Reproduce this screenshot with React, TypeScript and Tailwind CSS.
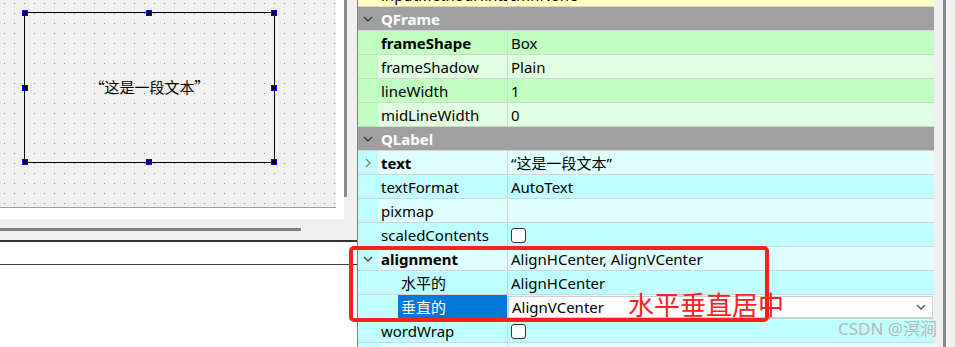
import React from "react";

type Colors = { dark: string; light: string };

const GREEN: Colors = { dark: "bg-[#c0ffc0]", light: "bg-[#e0ffe0]" };
const CYAN: Colors = { dark: "bg-[#c0ffff]", light: "bg-[#e0ffff]" };
const YELLOW: Colors = { dark: "bg-[#ffffc0]", light: "bg-[#ffffc0]" };

const ChevronDown = ({ className }: { className?: string }) => (
  <svg width="10" height="6" viewBox="0 0 10 6" className={className}>
    <polyline points="1,1 5,5 9,1" fill="none" stroke="currentColor" strokeWidth="1.4" />
  </svg>
);

const ChevronRight = () => (
  <svg width="6" height="10" viewBox="0 0 6 10" className="text-[#808080]">
    <polyline points="1,1 5,5 1,9" fill="none" stroke="currentColor" strokeWidth="1.4" />
  </svg>
);

const CheckBox = () => (
  <div className="w-[15px] h-[15px] rounded-[3px] border border-[#333] bg-white" />
);

type RowProps = {
  name: string;
  value?: React.ReactNode;
  colors: Colors;
  dark?: boolean;
  bold?: boolean;
  sub?: boolean;
  arrow?: "down" | "right";
  selected?: boolean;
  combo?: boolean;
};

const PropRow = ({ name, value, colors, dark, bold, sub, arrow, selected, combo }: RowProps) => {
  const bg = dark ? colors.dark : colors.light;
  return (
    <div className="flex h-[24px] shrink-0 border-b border-[#d4d4d4]">
      <div className={`w-[20px] flex items-center justify-center ${colors.dark}`}>
        {arrow === "down" && <ChevronDown className="text-[#404040]" />}
        {arrow === "right" && <ChevronRight />}
      </div>
      <div className={`w-[130px] flex border-r border-[#d4d4d4] ${bg}`}>
        {sub && <div className={`w-[20px] ${colors.dark}`} />}
        <div
          className={`flex-1 flex items-center pl-[3px] pt-px whitespace-nowrap overflow-hidden ${
            selected ? "bg-[#0078d7] text-white" : "text-black"
          } ${bold ? "font-bold" : ""}`}
        >
          {name}
        </div>
      </div>
      {combo ? (
        <div className={`flex-1 flex pt-px pr-px ${bg}`}>
          <div className="flex-1 h-[22px] bg-white border border-[#cfcfcf] flex items-center justify-between pl-[3px] pr-[6px]">
            <span className="pt-px">{value}</span>
            <ChevronDown className="text-[#555]" />
          </div>
        </div>
      ) : (
        <div className={`flex-1 flex items-center pl-[3px] pt-px whitespace-nowrap ${bg}`}>{value}</div>
      )}
    </div>
  );
};

const GroupHeader = ({ title }: { title: string }) => (
  <div className="flex h-[24px] shrink-0 bg-[#a0a0a0] border-b border-[#d4d4d4]">
    <div className="w-[20px] flex items-center justify-center">
      <ChevronDown className="text-[#404040]" />
    </div>
    <div className="pl-[3px] pt-px flex items-center font-bold text-white">{title}</div>
  </div>
);

const Handle = ({ pos }: { pos: string }) => (
  <div className={`absolute w-[6px] h-[6px] bg-black border border-[#0000ff] ${pos}`} />
);

export default function App() {
  return (
    <div className="relative w-[955px] h-[347px] flex overflow-hidden bg-white text-[15px] font-['Noto_Sans','Noto_Sans_CJK_SC',sans-serif]">
      {/* form editor */}
      <div className="w-[357px] flex flex-col">
        <div className="h-[240px] bg-[#f0f0f0] flex flex-col">
          <div className="h-[219px] flex">
            <div className="w-[344px] bg-white pr-[8px] pb-[11px]">
              <div className="w-[336px] h-[208px] border-b border-[#a0a0a0] bg-[#f0f0f0] bg-[radial-gradient(circle_at_4.5px_3.5px,#8a8a8a_0.7px,transparent_0.7px)] bg-size-[10px_10px] pt-[12px] pl-[24px]">
                <div className="relative w-[251px] h-[151px] border border-black flex items-center justify-center font-['Noto_Sans_CJK_SC',sans-serif] text-black">
                  “这是一段文本”
                  <Handle pos="-left-[3px] -top-[3px]" />
                  <Handle pos="left-[121px] -top-[3px]" />
                  <Handle pos="-right-[3px] -top-[3px]" />
                  <Handle pos="-left-[3px] top-[72px]" />
                  <Handle pos="-right-[3px] top-[72px]" />
                  <Handle pos="-left-[3px] -bottom-[3px]" />
                  <Handle pos="left-[121px] -bottom-[3px]" />
                  <Handle pos="-right-[3px] -bottom-[3px]" />
                </div>
              </div>
            </div>
            <div className="w-[13px]">
              <div className="w-[3px] h-[197px] bg-[#8a8a8a]" />
            </div>
          </div>
          <div className="pt-[9px]">
            <div className="w-[301px] h-[3px] bg-[#808080]" />
          </div>
        </div>
        <div className="h-[2px] bg-[#333]" />
        <div className="h-[22px]" />
        <div className="h-px bg-[#444]" />
        <div className="flex-1" />
      </div>

      <div className="w-px bg-[#7f7f7f]" />

      {/* property editor */}
      <div className="w-[576px] flex flex-col overflow-hidden">
        <div className="-mt-[17px]">
          <PropRow name="inputMethodHints" value="ImhNone" colors={YELLOW} />
        </div>
        <GroupHeader title="QFrame" />
        <PropRow name="frameShape" value="Box" colors={GREEN} dark bold />
        <PropRow name="frameShadow" value="Plain" colors={GREEN} />
        <PropRow name="lineWidth" value="1" colors={GREEN} dark />
        <PropRow name="midLineWidth" value="0" colors={GREEN} />
        <GroupHeader title="QLabel" />
        <PropRow name="text" value="“这是一段文本”" colors={CYAN} bold arrow="right" />
        <PropRow name="textFormat" value="AutoText" colors={CYAN} dark />
        <PropRow name="pixmap" value="" colors={CYAN} />
        <PropRow name="scaledContents" value={<CheckBox />} colors={CYAN} dark />
        <PropRow name="alignment" value="AlignHCenter, AlignVCenter" colors={CYAN} bold arrow="down" />
        <PropRow name="水平的" value="AlignHCenter" colors={CYAN} dark sub />
        <PropRow name="垂直的" value="AlignVCenter" colors={CYAN} sub selected combo />
        <PropRow name="wordWrap" value={<CheckBox />} colors={CYAN} dark />
        <PropRow name="" value="" colors={CYAN} />
      </div>

      <div className="w-[21px] bg-[#f0f0f0] pl-[9px]">
        <div className="w-[3px] h-full bg-[#8a8a8a]" />
      </div>

      {/* annotation */}
      <div className="absolute left-[349px] top-[246px] w-[420px] h-[76px] border-[4px] border-[#ff1f1f] rounded-[5px]" />
      <div className="absolute left-[628px] top-[288px] text-[26px] leading-[32px] text-[#ff2020] font-['Noto_Sans_CJK_SC',sans-serif]">
        水平垂直居中
      </div>
      <div className="absolute left-[838px] top-[316px] text-[17px] text-[#b4b8b8] font-['Noto_Sans','Noto_Sans_CJK_SC',sans-serif]">
        CSDN @溟涧
      </div>
    </div>
  );
}
